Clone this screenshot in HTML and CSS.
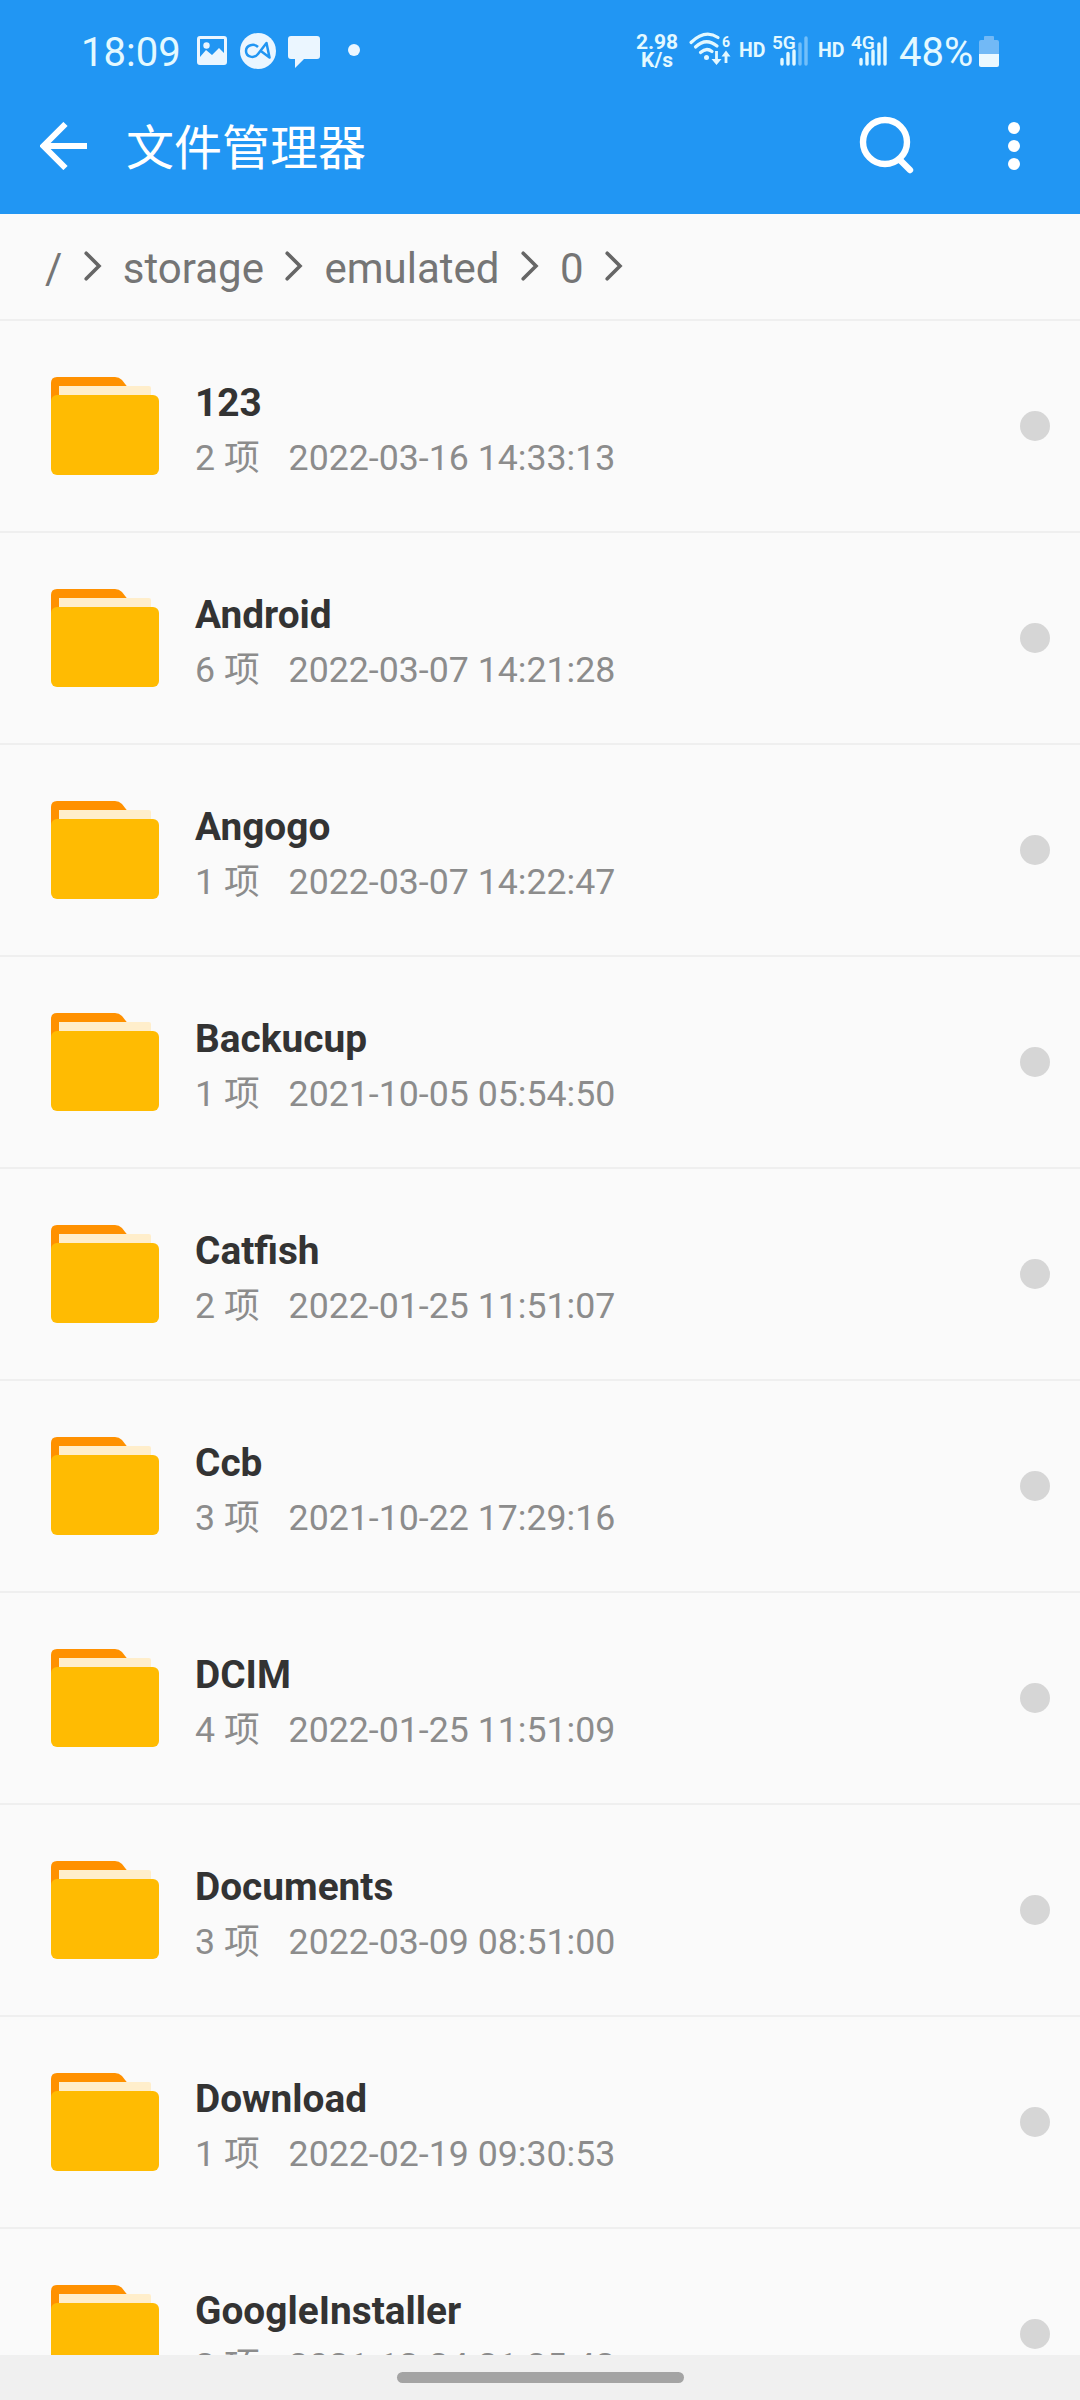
FILE: index.html
```html
<!DOCTYPE html>
<html lang="zh-CN">
<head>
<meta charset="utf-8">
<title>文件管理器</title>
<link rel="stylesheet" href="styles.css">
</head>
<body>
<svg class="defs" aria-hidden="true">
  <symbol id="folder" viewBox="0 0 108 98">
    <path d="M0 30V6Q0 0 6 0H64Q68 0 71 3L78 12V30Z" fill="#ff9100"/>
    <path d="M8 9H98Q100 9 100 11V30H8Z" fill="#ffeecb"/>
    <rect y="18" width="108" height="80" rx="6" fill="#ffbb02"/>
  </symbol>
  <symbol id="chevron" viewBox="0 0 18 30">
    <path d="M2.2 2.2L15 15L2.2 27.8" fill="none" stroke="#666" stroke-width="3.6" stroke-linecap="round"/>
  </symbol>
</svg>
<div class="screen">
  <header class="header">
    <div class="status">
      <span class="clock">18:09</span>
      <svg class="notices" viewBox="0 0 164 40" width="164" height="40">
        <path fill-rule="evenodd" d="M3 5H27Q30 5 30 8V31Q30 34 27 34H3Q0 34 0 31V8Q0 5 3 5ZM3 8V26L9 19L15 24L22 17L27 22V8Z" fill="#ebf6ff"/>
        <circle cx="9.500" cy="14.500" r="3.200" fill="#ebf6ff"/>
        <circle cx="61" cy="20" r="18" fill="#ebf6ff"/>
        <path d="M61 16C57 12 49 14 49 20S57 28 61 23L69.500 12L72.500 26.500L64.500 20.500" fill="none" stroke="#2196f3" stroke-width="2.500" stroke-linejoin="round"/>
        <path d="M94 5H120Q123 5 123 8V25Q123 28 120 28H107L98 37V28H94Q91 28 91 25V8Q91 5 94 5Z" fill="#ebf6ff"/>
        <circle cx="157" cy="19" r="6" fill="#ebf6ff"/>
      </svg>
      <div class="speed"><span>2.98</span><span>K/s</span></div>
      <svg class="wifi" viewBox="0 0 42 36" width="42" height="36">
        <g fill="none" stroke="#e2f8ff" stroke-width="3.200" stroke-linecap="round">
          <path d="M2 9.500Q16 -4 29 4.500M6.500 14Q17 4 28 13M11.500 19.500Q17.500 14 23 18.500"/>
        </g>
        <circle cx="17.500" cy="24.500" r="2.500" fill="#e2f8ff"/>
        <path d="M27.500 18V28M37 30V20" stroke="#e2f8ff" stroke-width="2.800"/>
        <path d="M22.500 26H32.500L27.500 32ZM32.500 23.500H41.500L37 17.500Z" fill="#e2f8ff"/>
        <text x="33" y="13.500" class="tiny">6</text>
      </svg>
      <span class="hd">HD</span>
      <svg class="signal" viewBox="0 0 36 34" width="36" height="34">
        <text x="0" y="15" class="net">5G</text>
        <path d="M10 30V25.500M16 30V19.500M22 30V17" class="bar"/>
        <path d="M28 30V10M34 30V4" class="bar dim"/>
      </svg>
      <span class="hd second">HD</span>
      <svg class="signal" viewBox="0 0 36 34" width="36" height="34">
        <text x="0" y="15" class="net">4G</text>
        <path d="M10 30V25.500M16 30V19.500M22 30V17M28 30V10M34 30V4" class="bar"/>
      </svg>
      <span class="percent">48%</span>
      <svg class="battery" viewBox="0 0 20 31" width="20" height="31">
        <path d="M5 4V1Q5 0 6 0H14Q15 0 15 1V4H18Q20 4 20 6V18H0V6Q0 4 2 4Z" fill="#72b9f6"/>
        <path d="M0 18H20V29Q20 31 18 31H2Q0 31 0 29Z" fill="#ebf8ff"/>
      </svg>
    </div>
    <div class="appbar">
      <svg class="back" viewBox="0 0 48 48" width="48" height="48">
        <path d="M47 24H5M25.500 2L3.500 24L25.500 46" fill="none" stroke="#fff" stroke-width="6"/>
      </svg>
      <h1 class="title">文件管理器</h1>
      <svg class="search" viewBox="0 0 56 60" width="56" height="60">
        <circle cx="26" cy="26" r="22" fill="none" stroke="#fff" stroke-width="6.400"/>
        <path d="M42 45L51 54" stroke="#fff" stroke-width="6.400" stroke-linecap="round"/>
      </svg>
      <svg class="more" viewBox="0 0 12 50" width="12" height="50">
        <g fill="#fff"><circle cx="6" cy="7" r="6"/><circle cx="6" cy="25" r="6"/><circle cx="6" cy="43" r="6"/></g>
      </svg>
    </div>
  </header>
  <nav class="crumbs">
    <span>/</span><svg class="chev"><use href="#chevron"/></svg>
    <span>storage</span><svg class="chev"><use href="#chevron"/></svg>
    <span>emulated</span><svg class="chev"><use href="#chevron"/></svg>
    <span>0</span><svg class="chev"><use href="#chevron"/></svg>
  </nav>
  <main class="list">
    <div class="row"><svg class="folder"><use href="#folder"/></svg><div class="info"><div class="name">123</div><div class="meta"><span>2 项</span><span>2022-03-16 14:33:13</span></div></div><i class="pick"></i></div>
    <div class="row"><svg class="folder"><use href="#folder"/></svg><div class="info"><div class="name">Android</div><div class="meta"><span>6 项</span><span>2022-03-07 14:21:28</span></div></div><i class="pick"></i></div>
    <div class="row"><svg class="folder"><use href="#folder"/></svg><div class="info"><div class="name">Angogo</div><div class="meta"><span>1 项</span><span>2022-03-07 14:22:47</span></div></div><i class="pick"></i></div>
    <div class="row"><svg class="folder"><use href="#folder"/></svg><div class="info"><div class="name">Backucup</div><div class="meta"><span>1 项</span><span>2021-10-05 05:54:50</span></div></div><i class="pick"></i></div>
    <div class="row"><svg class="folder"><use href="#folder"/></svg><div class="info"><div class="name">Catfish</div><div class="meta"><span>2 项</span><span>2022-01-25 11:51:07</span></div></div><i class="pick"></i></div>
    <div class="row"><svg class="folder"><use href="#folder"/></svg><div class="info"><div class="name">Ccb</div><div class="meta"><span>3 项</span><span>2021-10-22 17:29:16</span></div></div><i class="pick"></i></div>
    <div class="row"><svg class="folder"><use href="#folder"/></svg><div class="info"><div class="name">DCIM</div><div class="meta"><span>4 项</span><span>2022-01-25 11:51:09</span></div></div><i class="pick"></i></div>
    <div class="row"><svg class="folder"><use href="#folder"/></svg><div class="info"><div class="name">Documents</div><div class="meta"><span>3 项</span><span>2022-03-09 08:51:00</span></div></div><i class="pick"></i></div>
    <div class="row"><svg class="folder"><use href="#folder"/></svg><div class="info"><div class="name">Download</div><div class="meta"><span>1 项</span><span>2022-02-19 09:30:53</span></div></div><i class="pick"></i></div>
    <div class="row"><svg class="folder"><use href="#folder"/></svg><div class="info"><div class="name">GoogleInstaller</div><div class="meta"><span>2 项</span><span>2021-12-24 21:25:42</span></div></div><i class="pick"></i></div>
  </main>
  <footer class="gesture"><div class="handle"></div></footer>
</div>
</body>
</html>
```
FILE: styles.css
```css
* { box-sizing: border-box; }
body { margin: 0; font-family: Roboto, "Noto Sans CJK SC", sans-serif; }
svg { display: block; flex: none; }
.defs { width: 0; height: 0; position: absolute; }
.screen { width: 1080px; height: 2400px; display: flex; flex-direction: column; overflow: hidden; background: #fafafa; }

.header { flex: none; height: 214px; background: #2196f3; color: #fff; }
.status { height: 102px; display: flex; align-items: center; padding: 0 81px; color: #e4f9ff; white-space: nowrap; }
.status svg { overflow: visible; }
.clock, .percent { font-size: 40px; line-height: 48px; padding-top: 4px; }
.clock { width: 116px; }
.notices { margin-bottom: 1px; }
.speed { display: flex; flex-direction: column; align-items: center; width: 42px; margin-left: auto; font-size: 21px; font-weight: 700; line-height: 18px; }
.wifi { margin-left: 11px; }
.tiny { font: 700 14px Roboto, sans-serif; fill: #e4f9ff; }
.hd { width: 27px; margin-left: 8px; font-size: 19.5px; font-weight: 700; line-height: 24px; }
.net { font: 600 19px Roboto, sans-serif; fill: #e4f9ff; }
.bar { stroke: #e4f9ff; stroke-width: 3.4; stroke-linecap: round; fill: none; }
.dim { stroke: #72bffa; }
.signal { margin-left: 6px; }
.hd.second { margin-left: 10px; }
.percent { width: 75px; margin-left: 12px; }
.battery { margin-left: 5px; }

.appbar { height: 112px; display: flex; align-items: center; padding: 0 60px 24px 40px; }
.title { margin: 5px 0 0 38px; font-size: 48px; font-weight: 400; line-height: 64px; flex: 1; }
.search { margin-right: 93px; }

.crumbs { flex: none; height: 105px; display: flex; align-items: center; padding: 4px 0 0 45px; font-size: 42px; line-height: 50px; color: #757575; }
.chev { width: 18px; height: 30px; margin: -6px 21px 0 21.5px; }

.list { flex: 1; min-height: 0; overflow: hidden; }
.row { height: 212px; display: flex; align-items: center; border-top: 2px solid #efefef; padding: 0 30px 0 51px; }
.folder { width: 108px; height: 98px; }
.info { flex: 1; margin-left: 36px; padding-top: 11px; }
.name { font-size: 38.8px; font-weight: 700; line-height: 48px; color: #333; }
.meta { display: flex; gap: 29px; margin-top: 5px; font-size: 35.7px; line-height: 52px; color: #8c8c8c; }
.pick { width: 30px; height: 30px; border-radius: 50%; background: #d6d6d6; }

.gesture { flex: none; height: 45px; background: #f0f0f0; display: flex; justify-content: center; padding-top: 17px; }
.handle { width: 287px; height: 11px; border-radius: 6px; background: #a4a4a4; }
```
